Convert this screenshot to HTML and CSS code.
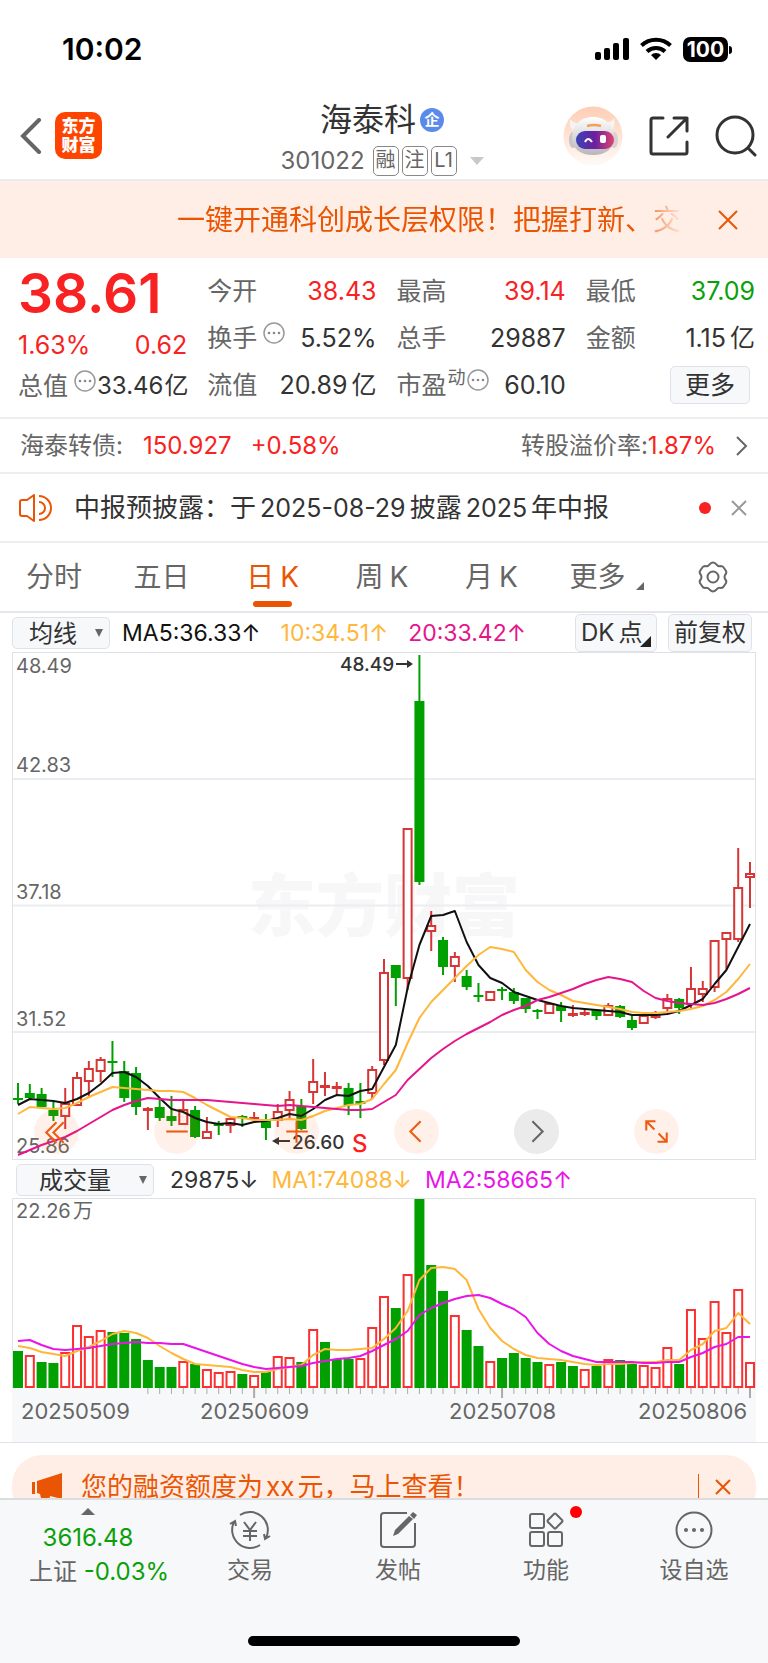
FILE: index.html
```html
<!DOCTYPE html>
<html lang="zh-CN">
<head>
<meta charset="utf-8">
<meta name="viewport" content="width=device-width, initial-scale=1">
<title>海泰科 301022</title>
<link rel="stylesheet" href="styles.css">
</head>
<body>
<div class="page">
  <div class="status">
    <span class="clock">10:02</span>
    <span class="status-icons">
      <svg width="34" height="24" viewBox="0 0 34 24"><rect x="0" y="15" width="6" height="8" rx="2"/><rect x="9" y="11" width="6" height="12" rx="2"/><rect x="18" y="6" width="6" height="17" rx="2"/><rect x="28" y="1" width="6" height="22" rx="2"/></svg>
      <svg width="32" height="24" viewBox="0 0 32 24"><g fill="none" stroke="#000" stroke-width="4"><path d="M1.500 8.500a21 21 0 0 1 29 0"/><path d="M7 14.500a13 13 0 0 1 18 0"/></g><path d="M16 23l-5-5a7 7 0 0 1 10 0z"/></svg>
      <span class="battery">100</span>
    </span>
  </div>

  <header class="header">
    <div class="header-left">
      <button class="icon-btn" aria-label="返回"><svg width="22" height="36" viewBox="0 0 22 36"><path d="M19 2L3 18l16 16" fill="none" stroke="#666" stroke-width="4" stroke-linecap="round"/></svg></button>
      <a class="logo" href="#"><span>东方</span><span>财富</span></a>
    </div>
    <div class="header-title">
      <h1>海泰科<span class="corp">企</span></h1>
      <div class="code"><span class="code-num">301022</span><span class="tag">融</span><span class="tag">注</span><span class="tag">L1</span><svg class="code-arrow" width="14" height="8" viewBox="0 0 14 8"><path d="M0 0h14L7 8z" fill="#c8c8c8"/></svg></div>
    </div>
    <div class="header-right">
      <button class="icon-btn" aria-label="智能助手">
        <svg width="60" height="60" viewBox="0 0 60 60">
          <defs>
            <linearGradient id="halo" x1="0" y1="0" x2="0" y2="1"><stop offset="0" stop-color="#ffcdb4"/><stop offset="1" stop-color="#fffaf7"/></linearGradient>
            <linearGradient id="visor" x1="0" y1="0" x2="1" y2="0"><stop offset="0" stop-color="#3d43b4"/><stop offset=".5" stop-color="#6b1fa0"/><stop offset="1" stop-color="#e2436e"/></linearGradient>
            <linearGradient id="shell" x1="0" y1="0" x2="0" y2="1"><stop offset="0" stop-color="#fff"/><stop offset="1" stop-color="#b9b5bb"/></linearGradient>
          </defs>
          <circle cx="30" cy="30" r="29.500" fill="url(#halo)"/>
          <path d="M7 13q-1 8 3 11l8-7q-8 1-11-4zM51 12q2 8-2 12l-8-8q8 1 10-4z" fill="#f6f3f3"/>
          <ellipse cx="10" cy="34" rx="4" ry="8" fill="#c9c4ca"/><ellipse cx="51" cy="34" rx="4" ry="8" fill="#d6d1d5"/>
          <path d="M30 11c13 0 21 9 21 21 0 11-9 17-21 17S9 43 9 32c0-12 8-21 21-21z" fill="url(#shell)"/>
          <rect x="13" y="25" width="38" height="18" rx="9" fill="url(#visor)"/>
          <path d="M24 20q7-2 14 0" stroke="#f2a05c" stroke-width="2.500" fill="none"/>
          <path d="M22 36q3-6 7 0" fill="none" stroke="#fff" stroke-width="2"/><rect x="37" y="29" width="6" height="8" rx="2" fill="#fff"/>
        </svg>
      </button>
      <button class="icon-btn" aria-label="分享"><svg width="40" height="40" viewBox="0 0 40 40" fill="none" stroke="#333" stroke-width="3" stroke-linecap="round" stroke-linejoin="round"><path d="M14 2H4a2 2 0 0 0-2 2v32a2 2 0 0 0 2 2h32a2 2 0 0 0 2-2V26"/><path d="M25 2h13v13M38 2L19 21"/></svg></button>
      <button class="icon-btn" aria-label="搜索"><svg width="42" height="42" viewBox="0 0 42 42" fill="none" stroke="#333" stroke-width="3" stroke-linecap="round"><circle cx="20" cy="20" r="18"/><path d="M33 33l7 7"/></svg></button>
    </div>
  </header>

  <div class="banner">
    <a class="banner-text" href="#">一键开通科创成长层权限！把握打新、交易</a>
    <button class="icon-btn" aria-label="关闭"><svg width="20" height="20" viewBox="0 0 20 20"><path d="M1 1l18 18M19 1L1 19" stroke="#ea5504" stroke-width="2"/></svg></button>
  </div>

  <section class="quote">
    <div class="quote-col">
      <strong class="price">38.61</strong>
      <div class="pair up change"><span>1.63%</span><span>0.62</span></div>
      <div class="pair"><span class="label">总值<svg class="more-dot" width="22" height="22" viewBox="0 0 22 22"><use href="#dots"/></svg></span><span class="num-s">33.46<i>亿</i></span></div>
    </div>
    <div class="quote-col">
      <div class="pair"><span class="label">今开</span><span class="up">38.43</span></div>
      <div class="pair"><span class="label">换手<svg class="more-dot" width="22" height="22" viewBox="0 0 22 22"><use href="#dots"/></svg></span><span>5.52%</span></div>
      <div class="pair"><span class="label">流值</span><span>20.89<i>亿</i></span></div>
    </div>
    <div class="quote-col">
      <div class="pair"><span class="label">最高</span><span class="up">39.14</span></div>
      <div class="pair"><span class="label">总手</span><span>29887</span></div>
      <div class="pair"><span class="label">市盈<small>动</small><svg class="more-dot tight" width="22" height="22" viewBox="0 0 22 22"><use href="#dots"/></svg></span><span>60.10</span></div>
    </div>
    <div class="quote-col">
      <div class="pair"><span class="label">最低</span><span class="down">37.09</span></div>
      <div class="pair"><span class="label">金额</span><span>1.15<i>亿</i></span></div>
      <div class="pair end"><button class="more-btn">更多</button></div>
    </div>
    <svg class="defs" width="0" height="0"><g id="dots"><circle cx="11" cy="11" r="10" fill="none" stroke="#999" stroke-width="1.500"/><circle cx="6" cy="11" r="1.300" fill="#888"/><circle cx="11" cy="11" r="1.300" fill="#888"/><circle cx="16" cy="11" r="1.300" fill="#888"/></g></svg>
  </section>

  <a class="bond" href="#">
    <span class="label">海泰转债:</span><span class="up bond-num">150.927</span><span class="up bond-pct">+0.58%</span>
    <span class="bond-right"><span class="label">转股溢价率:</span><span class="up">1.87%</span></span>
    <svg width="12" height="20" viewBox="0 0 12 20"><path d="M1 1l9 9-9 9" fill="none" stroke="#666" stroke-width="2"/></svg>
  </a>

  <div class="notice">
    <svg width="34" height="28" viewBox="0 0 34 28" fill="none" stroke="#ea5504" stroke-width="2" stroke-linejoin="round"><path d="M15 1v26L8 22H3q-2 0-2-2V8q0-2 2-2h5z"/><path d="M20 8a6 6 0 0 1 0 12M20 2a12 12 0 0 1 0 24"/></svg>
    <a class="notice-text" href="#">中报预披露：于<b>2025-08-29</b>披露<b>2025</b>年中报</a>
    <span class="dot"></span>
    <button class="icon-btn" aria-label="关闭"><svg width="16" height="16" viewBox="0 0 16 16"><path d="M1 1l14 14M15 1L1 15" stroke="#999" stroke-width="2"/></svg></button>
  </div>

  <nav class="tabs">
    <button>分时</button><button>五日</button><button class="k active">日<b>K</b></button><button class="k">周<b>K</b></button><button class="k">月<b>K</b></button>
    <button class="tab-more">更多<svg width="8" height="8" viewBox="0 0 8 8"><path d="M8 0v8H0z" fill="#666"/></svg></button>
    <button aria-label="设置"><svg width="34" height="32" viewBox="0 0 34 32" fill="none" stroke="#666" stroke-width="2" stroke-linejoin="round"><path d="M9 5q3 1 5-2 3-3 6 0 2 3 5 2 2 0 3 2l2 3q1 2-1 4-1 2 0 4 2 2 1 4l-2 3q-1 2-3 2-3-1-5 2-3 3-6 0-2-3-5-2-2 0-3-2l-2-3q-1-2 1-4 1-2 0-4-2-2-1-4l2-3q1-2 3-2z"/><circle cx="17" cy="16" r="5.500"/></svg></button>
  </nav>

  <div class="ma-bar">
    <label class="drop ma-drop"><select aria-label="主图指标"><option>均线</option></select></label>
    <span class="ma-values"><span class="c-black">MA5:36.33↑</span><span class="c-gold">10:34.51↑</span><span class="c-pink">20:33.42↑</span></span>
    <button class="chip dk">DK<i>点</i><svg width="11" height="11" viewBox="0 0 11 11"><path d="M11 0v11H0z" fill="#222"/></svg></button>
    <button class="chip">前复权</button>
  </div>

  <div class="chart">
    <svg id="kline" viewBox="12 652 744 508" role="img" aria-label="日K线"></svg>
    <div class="chart-tools">
      <button aria-label="最早"><svg viewBox="0 0 44 44"><path d="M22 13l-10 10 10 10M29 13L19 23l10 10"/></svg></button>
      <button aria-label="缩小"><svg viewBox="0 0 44 44"><path d="M12 22h21"/></svg></button>
      <button aria-label="放大"><svg viewBox="0 0 44 44"><path d="M12 22h21M22 12v21"/></svg></button>
      <button aria-label="向前"><svg viewBox="0 0 44 44"><path d="M26 12L16 22l10 10"/></svg></button>
      <button class="off" aria-label="向后"><svg viewBox="0 0 44 44"><path d="M18 12l10 10-10 10"/></svg></button>
      <button aria-label="全屏"><svg viewBox="0 0 44 44"><path d="M12 21v-9h9M12 12l8 8M32 23v9h-9M32 32l-8-8"/></svg></button>
    </div>
  </div>

  <div class="vol-bar">
    <label class="drop vol-drop"><select aria-label="副图指标"><option>成交量</option></select></label>
    <span class="vol-values"><span class="c-dark">29875↓</span><span class="c-gold">MA1:74088↓</span><span class="c-magenta">MA2:58665↑</span></span>
  </div>
  <div class="chart"><svg id="volume" viewBox="12 1198 744 244" role="img" aria-label="成交量"></svg></div>

  <div class="promo-wrap">
    <div class="promo">
      <svg width="32" height="28" viewBox="0 0 32 28" fill="#ea5504"><path d="M0 9h3v12H0zM5 8L30 0v26l-12-3-1 5-8-3-1-4-3-1z"/></svg>
      <a class="promo-text" href="#">您的融资额度为<b>xx</b>元，马上查看！</a>
      <span class="promo-line"></span>
      <button class="icon-btn" aria-label="关闭"><svg width="16" height="16" viewBox="0 0 16 16"><path d="M1 1l14 14M15 1L1 15" stroke="#ea5504" stroke-width="2"/></svg></button>
    </div>
  </div>

  <footer class="bottom">
    <nav class="bottom-nav">
      <a class="index" href="#"><svg width="14" height="7" viewBox="0 0 14 7"><path d="M7 0l7 7H0z" fill="#666"/></svg><span class="down">3616.48</span><span class="index-row">上证 <span class="down">-0.03%</span></span></a>
      <a href="#"><svg width="42" height="38" viewBox="0 0 42 38" fill="none" stroke="#666" stroke-width="2"><path d="M11 4a18 18 0 0 1 26 23M31 34A18 18 0 0 1 5 11M1 13l5-3 1 5M41 25l-5 3-1-5"/><path d="M15 11l6 8 6-8M21 19v11M14 20h14M14 25h14"/></svg><span>交易</span></a>
      <a href="#"><svg width="38" height="38" viewBox="0 0 38 38" fill="none" stroke="#666" stroke-width="2"><path d="M28 2H5a3 3 0 0 0-3 3v28a3 3 0 0 0 3 3h28a3 3 0 0 0 3-3V12"/><path d="M14 25l2-6L30 5l4 3-15 15zM31 4l3-3 4 3-3 4z" fill="#666" stroke="none"/></svg><span>发帖</span></a>
      <a href="#"><span class="badge-box"><svg width="36" height="36" viewBox="0 0 36 36" fill="none" stroke="#666" stroke-width="2"><rect x="2" y="2" width="14" height="14" rx="2"/><rect x="2" y="20" width="14" height="14" rx="2"/><rect x="20" y="20" width="14" height="14" rx="2"/><path d="M26 2q1-1 2 0l6 6q1 1 0 2l-6 6q-1 1-2 0l-6-6q-1-1 0-2z"/></svg><span class="badge"></span></span><span>功能</span></a>
      <a href="#"><svg width="38" height="38" viewBox="0 0 38 38"><circle cx="19" cy="19" r="17.500" fill="none" stroke="#666" stroke-width="2"/><g fill="#666"><circle cx="11" cy="19" r="2"/><circle cx="19" cy="19" r="2"/><circle cx="27" cy="19" r="2"/></g></svg><span>设自选</span></a>
    </nav>
    <div class="home-bar"></div>
  </footer>
</div>
<script src="chart.js"></script>
</body>
</html>
```
FILE: styles.css
```css
* { box-sizing: border-box; }
body {
  margin: 0;
  background: #fff;
  color: #333;
  font-family: Inter, "Noto Sans CJK SC", sans-serif;
  font-size: 24px;
  font-weight: 400;
  line-height: 32px;
  text-autospace: no-autospace;
}
button, select { font: inherit; color: inherit; border: 0; background: none; padding: 0; margin: 0; }
a { color: inherit; text-decoration: none; }
svg { display: block; flex: none; }
i, b { font-style: normal; font-weight: inherit; }
i { margin-left: 4px; }
.page { display: flex; flex-direction: column; min-height: 100vh; }
.up { color: #f82222; }
.down { color: #0aa00a; }
.label { color: #666; }
.icon-btn { display: flex; flex: none; }

.status { display: flex; justify-content: space-between; align-items: center; height: 92px; padding: 6px 36px 0 62px; }
.clock { font-size: 30px; font-weight: 600; color: #000; }
.status-icons { display: flex; align-items: center; gap: 11px; }
.battery {
  position: relative;
  width: 45px; height: 25px; margin-right: 4px; border-radius: 7px;
  background: #000; color: #fff; font-size: 21px; font-weight: 700; line-height: 25px; text-align: center;
}
.battery::after { content: ""; position: absolute; right: -4px; top: 9px; width: 3px; height: 8px; border-radius: 0 3px 3px 0; background: #000; }

.header {
  display: grid; grid-template-columns: 1fr auto 1fr; align-items: center;
  height: 89px; padding: 0 11px; border-bottom: 2px solid #ececee;
}
.header-left { display: flex; align-items: center; gap: 13px; padding-left: 9px; }
.logo {
  display: flex; flex-direction: column; justify-content: center; align-items: center;
  width: 47px; height: 47px; border-radius: 10px; background: #ff4400; color: #fff;
  font-size: 17px; font-weight: 900; line-height: 19px;
}
.header-title { display: flex; flex-direction: column; align-items: center; gap: 5px; padding: 6px 4px 0 0; }
h1 { display: flex; align-items: center; gap: 4px; margin: 0; font-size: 32px; font-weight: 400; line-height: 40px; }
.corp { width: 24px; height: 24px; border-radius: 50%; background: #5b8bea; color: #fff; font-size: 15px; font-weight: 700; line-height: 24px; text-align: center; }
.code { display: flex; align-items: center; gap: 3px; color: #666; font-size: 24px; }
.code-num { margin-right: 5px; }
.tag { min-width: 26px; height: 30px; padding: 0 2px; border: 1px solid #888; border-radius: 5px; font-size: 20px; line-height: 27px; text-align: center; }
.code-arrow { margin-left: 10px; }
.header-right { display: flex; justify-content: flex-end; align-items: center; gap: 26px; }

.banner { display: flex; align-items: center; gap: 35px; height: 77px; padding: 0 30px 0 177px; background: #ffeee6; }
.banner-text {
  flex: 1; min-width: 0; overflow: hidden; white-space: nowrap; color: #ea5504; font-size: 28px; line-height: 40px;
  -webkit-mask-image: linear-gradient(to right, #000 calc(100% - 50px), transparent);
  mask-image: linear-gradient(to right, #000 calc(100% - 50px), transparent);
}

.quote { display: grid; grid-template-columns: repeat(4, minmax(0, 1fr)); gap: 20px; height: 161px; padding: 9px 13px 0 18px; border-bottom: 2px solid #eee; font-size: 25px; }
.quote-col { display: flex; flex-direction: column; gap: 15px; padding-top: 8px; }
.quote-col:first-child { gap: 0; padding-top: 0; }
.price { height: 52px; color: #f82222; font-size: 55px; font-weight: 600; line-height: 52px; }
.change { margin: 10px 0 9px; }
.pair { display: flex; justify-content: space-between; align-items: center; height: 32px; white-space: nowrap; }
.num-s { font-size: 24px; }
.num-s i { margin-left: 1px; }
.end { justify-content: flex-end; }
.label { display: flex; white-space: nowrap; }
.label small { font-size: 18px; line-height: 18px; margin-left: 1px; }
.more-dot { margin-left: 6px; }
.num-s, .tight { margin-left: 1px; }
.more-btn { width: 80px; height: 38px; margin-right: 5px; border: 1px solid #dfe2e8; border-radius: 5px; background: #f7f8fa; line-height: 34px; }
.defs { position: absolute; }

.bond { display: flex; align-items: center; height: 55px; padding: 0 20px; border-bottom: 2px solid #eee; }
.bond-num { margin-left: 20px; }
.bond-pct { margin-left: 19px; }
.bond-right { display: flex; margin-left: auto; margin-right: 20px; }

.notice { display: flex; align-items: center; height: 69px; padding: 0 21px 0 19px; border-bottom: 2px solid #eee; font-size: 26px; }
.notice-text { margin-left: 21px; }
.notice-text b { margin: 0 4px; font-size: 25px; }
.dot { width: 12px; height: 12px; margin: 0 20px 0 auto; border-radius: 50%; background: #f82222; }

.tabs { display: flex; justify-content: space-between; align-items: stretch; height: 70px; padding: 0 38px 0 26px; border-bottom: 2px solid #e4e6ec; color: #666; font-size: 28px; }
.tabs button { position: relative; display: flex; align-items: center; }
.tabs .k { padding-left: 5px; }
.tabs b { margin-left: 6px; }
.tabs .active { color: #ea5504; }
.active::after { content: ""; position: absolute; left: 50%; bottom: 4px; width: 39px; height: 6px; margin-left: -17px; border-radius: 3px; background: #ea5504; }
.tab-more svg { margin: 18px 0 0 11px; }

.ma-bar { display: flex; align-items: center; height: 39px; padding: 0 16px 0 12px; }
.drop { position: relative; display: block; border: 1px solid #dfe2e8; border-radius: 5px; background: #f7f8fa; height: 32px; }
.drop select { width: 100%; height: 30px; appearance: none; line-height: 28px; }
.drop::after { content: ""; position: absolute; right: 6px; top: 11px; border: solid transparent; border-width: 8px 4px 0; border-top-color: #666; }
.ma-drop { width: 98px; }
.ma-drop select { padding-left: 16px; }
.ma-values, .vol-values { display: flex; font-size: 23px; white-space: nowrap; }
.ma-values { gap: 20px; margin: 0 auto 0 12px; }
.c-black { color: #111; }
.c-dark { color: #333; }
.c-gold { color: #ffb73b; }
.c-pink { color: #e5158b; }
.c-magenta { color: #e815e8; }
.chip { position: relative; height: 38px; padding: 0 5px; border: 1px solid #dfe2e8; border-radius: 5px; background: #f7f8fa; white-space: nowrap; }
.dk { width: 82px; margin-right: 11px; text-align: left; }
.dk svg { position: absolute; right: 5px; bottom: 4px; }

.chart { position: relative; margin: 0 12px; }
.chart > svg { width: 100%; height: auto; }
.chart-tools { position: absolute; left: 3%; right: 10.4%; bottom: 6px; display: flex; justify-content: space-between; }
.chart-tools button { width: 45px; height: 45px; border-radius: 50%; background: rgba(255, 102, 26, .09); }
.chart-tools path { fill: none; stroke: #ee5a10; stroke-width: 2; }
.chart-tools .off { background: #ebebeb; }
.chart-tools .off path { stroke: #666; }

.vol-bar { display: flex; align-items: center; height: 38px; padding: 2px 16px 0; }
.vol-drop { width: 138px; }
.vol-drop select { padding-left: 22px; }
.vol-values { gap: 13px; margin-left: 16px; }

.promo-wrap { flex: 1 0 56px; height: 56px; padding: 12px 12px 0; overflow: hidden; border-top: 1px solid #dfe2e8; }
.promo { display: flex; align-items: center; height: 64px; padding: 0 25px 0 20px; border-radius: 30px; background: #ffeee6; color: #ea5504; font-size: 26px; }
.promo-text { margin-left: 17px; }
.promo-text b { margin: 0 3px; }
.promo-line { width: 1px; height: 26px; margin: 0 16px 0 auto; background: #ea5504; }

.bottom { display: flex; flex-direction: column; justify-content: space-between; align-items: center; height: 165px; padding-bottom: 17px; border-top: 2px solid #dcdde0; background: #f7f8fa; color: #666; }
.bottom-nav { display: grid; grid-template-columns: 176px repeat(4, 1fr); width: 100%; font-size: 23px; }
.bottom-nav a { display: flex; flex-direction: column; align-items: center; gap: 5px; padding-top: 11px; }
.bottom-nav svg { height: 38px; }
.bottom-nav .index { gap: 2px; padding-top: 8px; font-size: 24px; white-space: nowrap; }
.bottom-nav .index svg { height: 7px; margin-bottom: 5px; }
.index-row { padding-left: 22px; }
.badge-box { position: relative; display: block; }
.badge { position: absolute; right: -18px; top: -5px; width: 12px; height: 12px; border-radius: 50%; background: #f00; }
.home-bar { width: 272px; height: 10px; border-radius: 5px; background: #000; }

.wm { font-size: 68px; font-weight: 900; fill: #f7f7f8; }
.axis { font-size: 20px; fill: #666; }
.mark { font-size: 19px; fill: #333; font-weight: 500; }
.sell { font-size: 24px; fill: #ff1e1e; font-weight: 500; }
.date { font-size: 22px; fill: #666; }
```
FILE: chart.js
```js
// Each candle: direction, high, body top, body bottom, low (chart units)
const candles = `g 1083 1098 1100 1104|g 1084 1093 1098 1100|g 1088 1094 1107 1107|g 1102 1110 1116 1121|r 1088 1103 1117 1129|r 1072 1077 1106 1106|r 1061 1068 1082 1098|r 1057 1059 1072 1082|g 1041 1061 1062 1077|g 1061 1071 1098 1102|g 1067 1073 1107 1115|r 1107 1108 1111 1130|g 1100 1107 1118 1121|g 1096 1116 1121 1126|r 1100 1109 1125 1125|g 1106 1110 1137 1138|r 1117 1131 1139 1139|g 1121 1124 1126 1135|r 1117 1118 1126 1133|g 1115 1116 1118 1127|r 1112 1117 1119 1120|g 1114 1121 1128 1140|r 1104 1111 1121 1127|r 1091 1099 1111 1118|g 1099 1106 1129 1130|r 1059 1081 1093 1104|r 1072 1085 1088 1096|r 1082 1086 1088 1094|g 1083 1088 1105 1115|g 1083 1101 1104 1118|r 1066 1069 1094 1099|r 959 972 1061 1065|g 965 965 978 1006|r 828 828 979 990|g 655 701 882 885|r 911 925 932 951|g 937 940 967 975|r 952 956 967 982|g 970 976 987 990|g 983 995 996 1002|r 991 991 1001 1001|g 987 989 991 1000|g 988 992 1001 1004|g 998 998 1009 1013|g 1009 1010 1012 1019|r 1002 1003 1014 1014|g 1002 1006 1011 1022|r 1005 1013 1016 1017|r 1010 1012 1014 1016|g 1010 1010 1016 1020|r 1003 1005 1016 1016|g 1005 1006 1017 1018|g 1016 1020 1028 1030|r 1013 1015 1024 1024|r 1011 1014 1018 1019|r 994 998 1009 1011|g 998 999 1008 1014|r 967 988 1005 1008|r 981 988 995 1002|r 940 940 988 992|r 932 932 940 969|r 848 887 940 942|r 862 873 878 908`.split('|').map(s => s.split(' '));

const ma5 = [1105,1099,1100,1101,1103,1099,1093,1084,1073,1072,1077,1086,1098,1109,1112,1118,1122,1124,1123,1125,1122,1121,1118,1114,1116,1109,1100,1095,1096,1091,1089,1067,1045,988,945,916,915,911,942,965,978,983,992,996,1000,1003,1006,1008,1009,1010,1011,1012,1015,1015,1015,1014,1011,1005,999,984,970,947,924];
const ma10 = [1114,1107,1108,1109,1108,1103,1097,1092,1087,1088,1089,1090,1091,1091,1092,1098,1105,1111,1117,1118,1120,1120,1120,1119,1120,1116,1111,1108,1105,1104,1099,1084,1070,1043,1018,1002,990,978,966,955,947,949,952,970,982,990,995,1001,1003,1005,1007,1009,1012,1013,1013,1012,1011,1009,1006,1000,992,979,964];
const ma20 = [1155,1150,1145,1141,1137,1131,1124,1117,1110,1105,1101,1098,1099,1100,1100,1100,1100,1101,1102,1103,1104,1105,1106,1105,1106,1107,1108,1109,1110,1110,1109,1102,1095,1080,1069,1058,1049,1041,1034,1028,1022,1015,1010,1006,1000,997,993,989,984,980,977,979,982,991,998,1001,1003,1004,1005,1003,999,994,988];

const volumes = 'g1351 r1355 g1362 g1363 r1352 r1325 r1336 r1330 g1332 g1333 g1339 g1360 g1367 g1367 r1361 g1364 r1369 r1372 r1371 g1374 r1375 g1372 r1356 r1357 g1362 r1329 g1342 g1359 g1359 r1358 r1327 r1296 g1308 r1274 g1199 g1265 g1291 r1315 g1330 g1346 r1361 g1358 g1353 g1358 g1362 r1364 g1362 g1366 r1369 g1366 r1359 g1360 g1364 r1365 r1367 r1347 g1364 r1309 r1338 r1301 r1332 r1289 r1362'.split(' ');
const vma1 = [1346,1348,1352,1354,1356,1351,1347,1341,1334,1331,1333,1338,1346,1353,1359,1364,1365,1366,1367,1370,1372,1372,1369,1367,1365,1355,1349,1350,1350,1349,1348,1339,1328,1311,1280,1268,1267,1269,1280,1309,1328,1341,1349,1355,1358,1359,1360,1362,1364,1365,1364,1364,1363,1362,1362,1360,1360,1350,1344,1331,1328,1313,1324];
const vma2 = [1341,1340,1345,1349,1350,1349,1348,1346,1344,1343,1342,1343,1343,1344,1344,1348,1352,1356,1360,1364,1367,1369,1368,1367,1366,1363,1361,1359,1358,1356,1351,1345,1339,1331,1315,1308,1303,1299,1296,1295,1298,1304,1309,1317,1333,1344,1351,1356,1359,1362,1362,1362,1362,1363,1363,1362,1362,1357,1353,1347,1344,1337,1337];

const GREEN = '#00a000', RED = '#d63636';
const px = i => 18 + i * 732 / 62;
const seg = (x1, y1, x2, y2, c, w) => `<path d="M${x1} ${y1}L${x2} ${y2}" stroke="${c}" stroke-width="${w}"/>`;
const curve = (ys, c) => `<polyline points="${ys.map((y, i) => px(i) + ',' + y).join(' ')}" fill="none" stroke="${c}" stroke-width="2" stroke-linejoin="round"/>`;
const txt = (x, y, cls, s) => `<text x="${x}" y="${y}" class="${cls}">${s}</text>`;

let k = txt(248, 931, 'wm', '东方财富');
for (const y of [779, 905.5, 1032]) k += seg(12, y, 756, y, '#ebedf2', 2);
k += '<rect x="12.500" y="652.500" width="743" height="507" fill="none" stroke="#dfe1e6"/>';
[['48.49', 673], ['42.83', 772], ['37.18', 899], ['31.52', 1026], ['25.86', 1153]].forEach(([s, y]) => { k += txt(16, y, 'axis', s); });
candles.forEach(([d, hi, top, bot, lo], i) => {
  const x = px(i), c = d === 'g' ? GREEN : RED, h = Math.max(bot - top, 2);
  if (d === 'g') {
    k += seg(x, hi, x, lo, c, 2) + `<rect x="${x - 5}" y="${top}" width="10" height="${h}" fill="${c}"/>`;
  } else {
    k += seg(x, hi, x, top, c, 2) + seg(x, bot, x, lo, c, 2);
    k += `<rect x="${x - 4}" y="${+top + 1}" width="8" height="${Math.max(h - 2, 1)}" fill="#fff" stroke="${c}" stroke-width="2"/>`;
  }
});
k += curve(ma5, '#111') + curve(ma10, '#ffb73b') + curve(ma20, '#e5158b');
k += txt(340, 671, 'mark', '48.49') + seg(396, 664, 409, 664, '#333', 2) + '<path d="M407 660l6 4-6 4z" fill="#333"/>';
k += txt(292, 1149, 'mark', '26.60') + seg(276, 1141, 290, 1141, '#333', 2) + '<path d="M279 1137l-7 4 7 4z" fill="#333"/>';
k += txt(352, 1152, 'sell', 'S');
document.getElementById('kline').innerHTML = k;

let v = '<rect x="12" y="1388" width="744" height="54" fill="#f7f8fa"/><path d="M12.500 1388V1198.500H755.500V1388" fill="none" stroke="#dfe1e6"/>';
v += txt(16, 1218, 'axis', '22.26') + txt(73, 1218, 'axis', '万');
volumes.forEach((s, i) => {
  const x = px(i), y = +s.slice(1);
  v += s[0] === 'g'
    ? `<rect x="${x - 5}" y="${y}" width="10" height="${1388 - y}" fill="${GREEN}"/>`
    : `<rect x="${x - 4}" y="${y + 1}" width="8" height="${1386 - y}" fill="#fff" stroke="#fb3030" stroke-width="2"/>`;
  if (i > 10) v += seg(x, 1388, x, i % 21 === 20 ? 1398 : 1394, '#aaa', i % 21 === 20 ? 2 : 1);
});
v += curve(vma1, '#ffb73b') + curve(vma2, '#e815e8');
[['20250509', 21], ['20250609', 200], ['20250708', 449], ['20250806', 638]].forEach(([s, x]) => { v += txt(x, 1419, 'date', s); });
document.getElementById('volume').innerHTML = v;
```
